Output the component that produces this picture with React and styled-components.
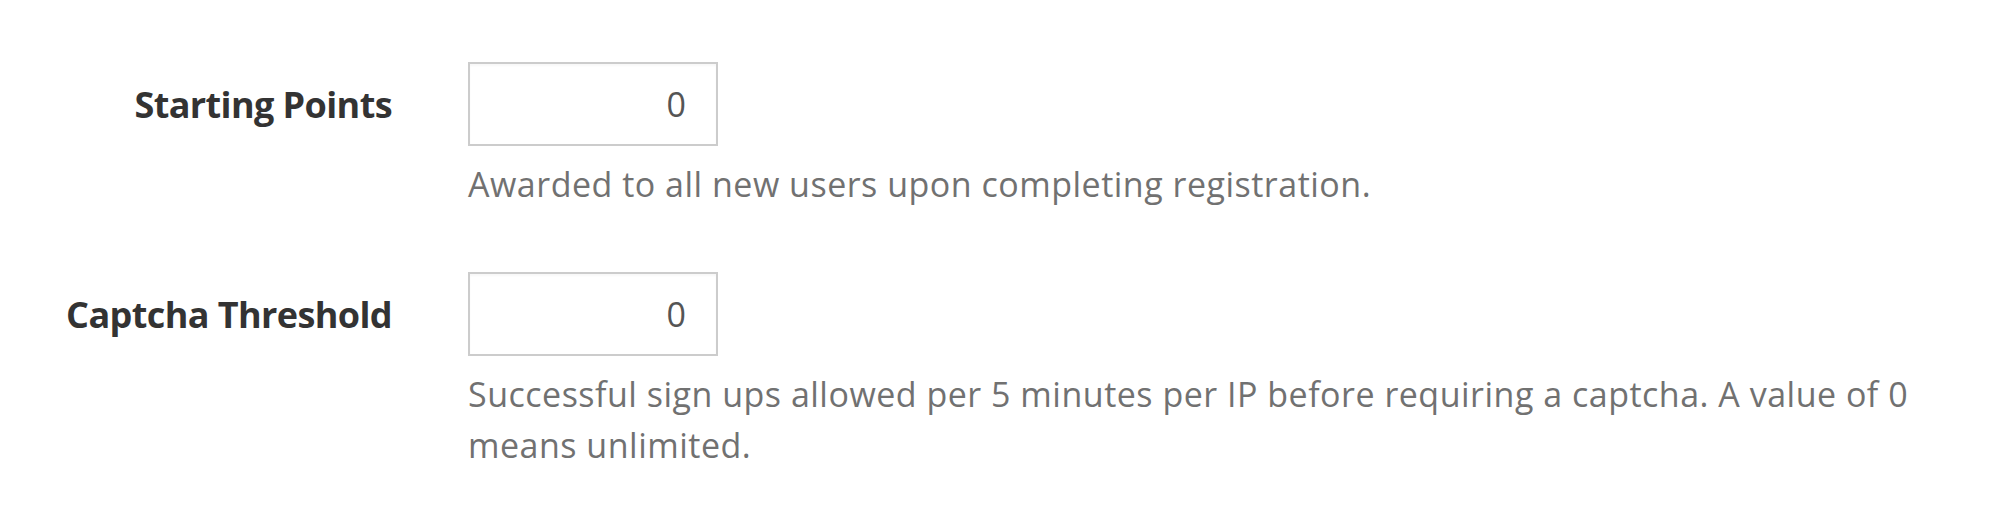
import React from "react";
import styled, { createGlobalStyle } from "styled-components";

const GlobalStyle = createGlobalStyle`
  html, body {
    margin: 0;
    padding: 0;
    background: #ffffff;
  }
  body {
    font-family: "Open Sans", "Noto Sans", "Liberation Sans", sans-serif;
  }
`;

const Form = styled.form`
  display: flex;
  flex-direction: column;
  gap: 62px;
  padding: 62px 40px 0 0;
`;

const Field = styled.div`
  display: grid;
  grid-template-columns: 392px 1fr;
  grid-template-rows: 84px auto;
  column-gap: 76px;
  row-gap: 13px;
`;

const Label = styled.label`
  grid-column: 1;
  grid-row: 1;
  align-self: center;
  justify-self: end;
  padding-top: 2px;
  font-size: 36px;
  line-height: 54px;
  font-weight: 700;
  letter-spacing: -0.6px;
  color: #333333;
  white-space: nowrap;
`;

const NumberInput = styled.input`
  grid-column: 2;
  grid-row: 1;
  box-sizing: border-box;
  width: 250px;
  height: 84px;
  margin: 0;
  padding: 0 30px 0 12px;
  border: 2px solid #cccccc;
  border-radius: 0;
  background: #ffffff;
  font-family: "Open Sans", "Noto Sans", sans-serif;
  font-size: 34px;
  color: #555555;
  text-align: right;
  outline: none;
  box-shadow: inset 0 2px 2px rgba(0, 0, 0, 0.03);
`;

const Help = styled.p`
  grid-column: 2;
  grid-row: 2;
  margin: 0;
  font-size: 34px;
  line-height: 51px;
  letter-spacing: 0.5px;
  color: #717171;
`;

const fields = [
  {
    id: "starting-points",
    label: "Starting Points",
    value: "0",
    help: "Awarded to all new users upon completing registration.",
  },
  {
    id: "captcha-threshold",
    label: "Captcha Threshold",
    value: "0",
    help:
      "Successful sign ups allowed per 5 minutes per IP before requiring a captcha. A value of 0 means unlimited.",
  },
];

export default function App() {
  return (
    <>
      <GlobalStyle />
      <Form onSubmit={(e) => e.preventDefault()}>
        {fields.map((f) => (
          <Field key={f.id}>
            <Label htmlFor={f.id}>{f.label}</Label>
            <NumberInput id={f.id} type="text" defaultValue={f.value} />
            <Help>{f.help}</Help>
          </Field>
        ))}
      </Form>
    </>
  );
}
